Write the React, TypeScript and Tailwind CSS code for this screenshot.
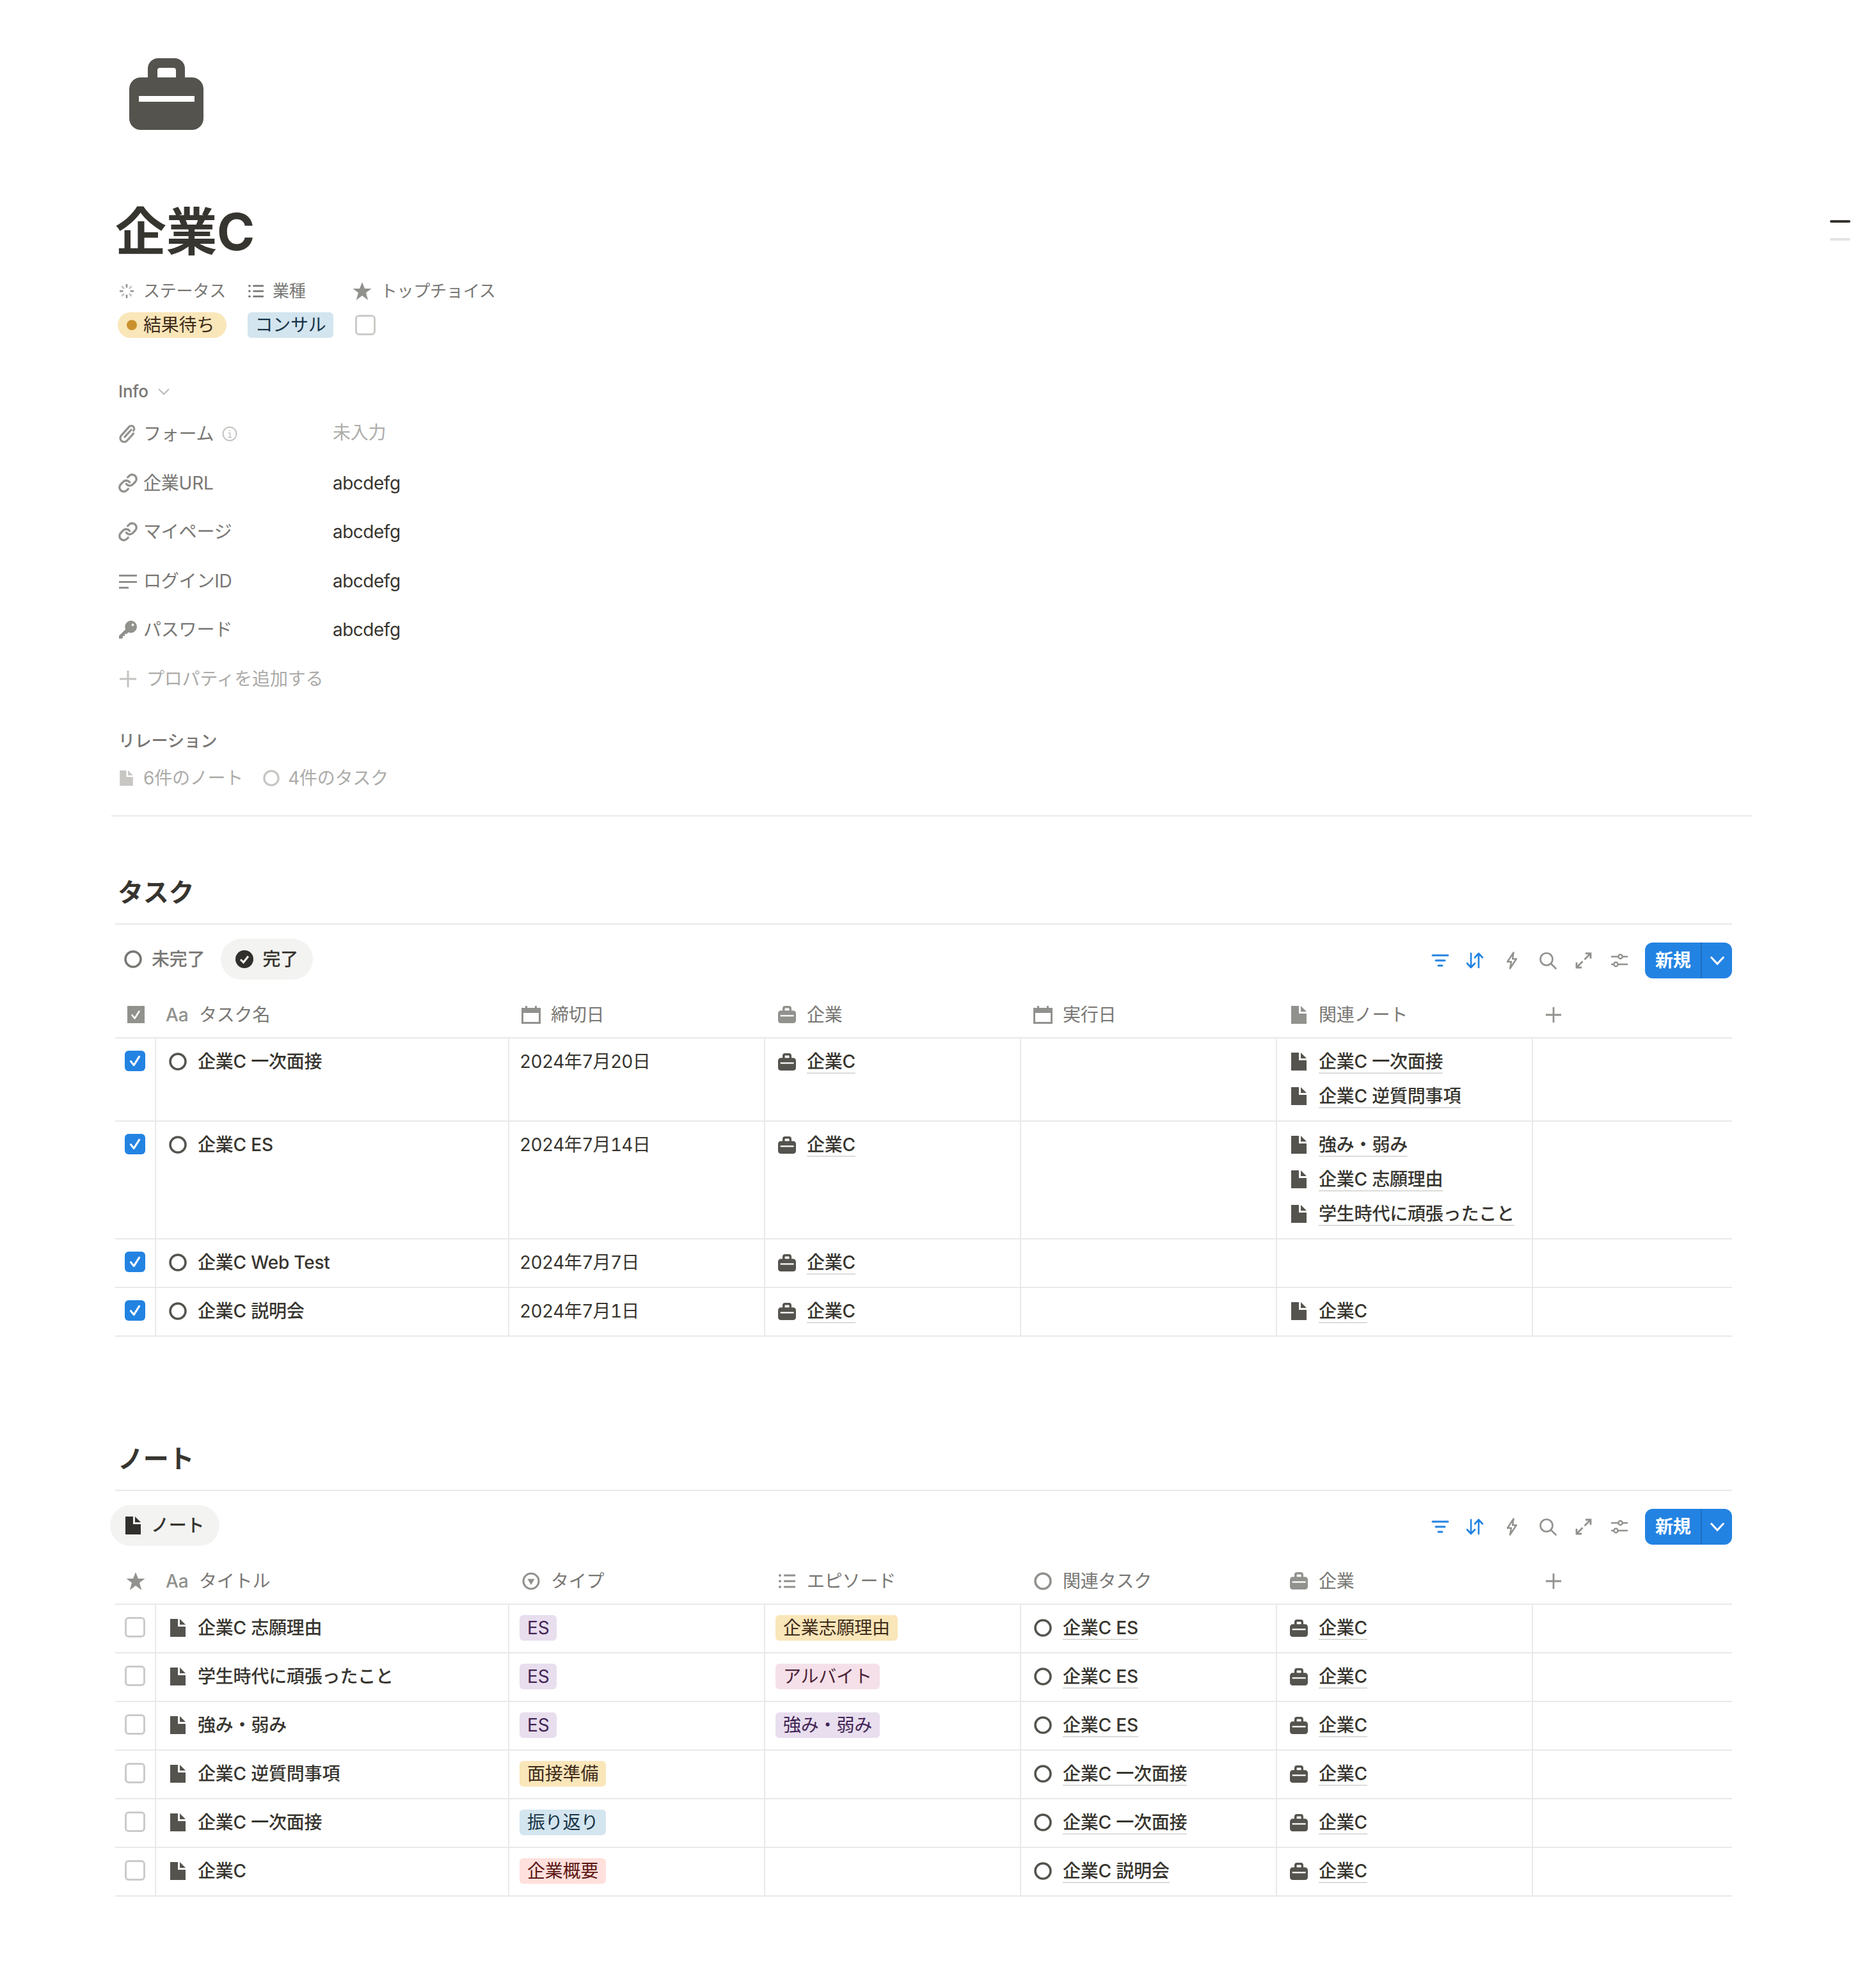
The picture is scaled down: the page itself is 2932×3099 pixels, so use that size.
import React from 'react'
import { Link as LinkIcon } from 'lucide-react'

const COLS = 'grid w-[2527px] grid-cols-[64px_552px_400px_400px_400px_400px_311px]'
const CELL = 'border-r-2 border-[#e9e9e7] pt-4'
const CHECK_CELL = 'border-r-2 border-[#e9e9e7] pt-[19px] flex justify-center'

function Case({ className = '' }: { className?: string }) {
  return (
    <svg viewBox="0 0 116 112" className={className} fill="currentColor">
      <path
        fillRule="evenodd"
        d="M29 30V16A16 16 0 0 1 45 0H71A16 16 0 0 1 87 16V30H98A18 18 0 0 1 116 48V94A18 18 0 0 1 98 112H18A18 18 0 0 1 0 94V48A18 18 0 0 1 18 30ZM44 30H73V19a4 4 0 0 0-4-4H48a4 4 0 0 0-4 4ZM15 59H102V68H15Z"
      />
    </svg>
  )
}

function Doc({ className = '' }: { className?: string }) {
  return (
    <svg viewBox="0 0 24 28" className={className} fill="currentColor">
      <path d="M0 0H12V12H24V28H0Z" />
      <path d="M15 0L24 9H15Z" />
    </svg>
  )
}

function Ring({ className = '' }: { className?: string }) {
  return (
    <svg viewBox="0 0 28 28" className={className} fill="none" stroke="currentColor" strokeWidth="3.5">
      <circle cx="14" cy="14" r="12" />
    </svg>
  )
}

function Star({ className = '' }: { className?: string }) {
  return (
    <svg viewBox="0 0 30 28" className={className} fill="currentColor">
      <path d="M15 0L19 10H29.5L21 16.5L24.2 28L15 21L5.8 28L9 16.5L.5 10H11Z" />
    </svg>
  )
}

function ListIcon({ className = '' }: { className?: string }) {
  return (
    <svg viewBox="0 0 26 24" className={className} fill="currentColor">
      <circle cx="2" cy="3" r="2" />
      <circle cx="2" cy="12" r="2" />
      <circle cx="2" cy="21" r="2" />
      <rect x="8" y="1.5" width="18" height="3" />
      <rect x="8" y="10.5" width="18" height="3" />
      <rect x="8" y="19.5" width="18" height="3" />
    </svg>
  )
}

function Calendar({ className = '' }: { className?: string }) {
  return (
    <svg viewBox="0 0 30 28" className={className} fill="currentColor">
      <path fillRule="evenodd" d="M6 0H9V3H21V0H24V3H30V28H0V3H6ZM3 11V25H27V11Z" />
    </svg>
  )
}

function SelectIcon({ className = '' }: { className?: string }) {
  return (
    <svg viewBox="0 0 28 28" className={className}>
      <circle cx="14" cy="14" r="12" fill="none" stroke="currentColor" strokeWidth="3" />
      <path d="M8.5 10.5H19.5L14 20Z" fill="currentColor" />
    </svg>
  )
}

function Spinner() {
  const spokes = [0, 45, 90, 135, 180, 225, 270, 315]
  return (
    <svg viewBox="0 0 24 24" className="w-6 h-6" stroke="#91918e" strokeWidth="2.6">
      {spokes.map((a, i) => (
        <line key={a} x1="12" y1="1" x2="12" y2="6.5" opacity={i % 2 ? 0.55 : 1} transform={`rotate(${a} 12 12)`} />
      ))}
    </svg>
  )
}

function Clip() {
  return (
    <svg viewBox="0 0 28 28" className="w-7 h-7" fill="none" stroke="#91918e" strokeWidth="3.2" strokeLinecap="round">
      <g transform="rotate(42 14 14)">
        <path d="M20 8V23a6 6 0 0 1-12 0V4.5a4.5 4.5 0 0 1 9 0" />
        <path d="M13.5 6V21" />
      </g>
    </svg>
  )
}

function TextLines() {
  return (
    <svg viewBox="0 0 28 24" className="w-7 h-6" fill="#91918e">
      <rect y="2" width="28" height="3" />
      <rect y="12" width="28" height="3" />
      <rect y="21" width="15" height="3" />
    </svg>
  )
}

function KeyIcon() {
  return (
    <svg viewBox="0 0 28 28" className="w-7 h-7" fill="#91918e">
      <path
        fillRule="evenodd"
        d="M18.5 0A9.5 9.5 0 1 1 14.6 18.2L12 20.8H9V24H6V27L4 28H0V23.5L10.2 13.4A9.5 9.5 0 0 1 18.5 0ZM21.5 4.5a2 2 0 1 0 0 4a2 2 0 1 0 0-4Z"
      />
    </svg>
  )
}

function InfoIcon() {
  return (
    <svg viewBox="0 0 24 24" className="w-6 h-6" fill="none" stroke="#c4c4c1" strokeWidth="2">
      <circle cx="12" cy="12" r="10.5" />
      <path d="M10 10.5H12.5V17M9.5 17.5H15" strokeWidth="1.6" />
      <circle cx="12" cy="7" r="1" fill="#c4c4c1" stroke="none" />
    </svg>
  )
}

function Plus({ className = '' }: { className?: string }) {
  return (
    <svg viewBox="0 0 28 28" className={className} stroke="currentColor" strokeWidth="3">
      <path d="M14 1V27M1 14H27" />
    </svg>
  )
}

function Check({ className = '' }: { className?: string }) {
  return (
    <svg viewBox="0 0 20 20" className={className} fill="none" stroke="currentColor" strokeWidth="2.6" strokeLinecap="round" strokeLinejoin="round">
      <path d="M4.5 10.5L8.5 15.5L15.5 4.5" />
    </svg>
  )
}

function CheckBox({ checked }: { checked: boolean }) {
  if (checked) {
    return (
      <div className="w-8 h-8 rounded-[6px] bg-[#2383e2] text-white flex items-center justify-center">
        <Check className="w-6 h-6" />
      </div>
    )
  }
  return <div className="w-8 h-8 rounded-[6px] border-[3px] border-[#cbcbc9]" />
}

function Toolbar() {
  return (
    <div className="flex items-center mt-[6px] text-[#91918e]">
      <div className="flex items-center gap-7">
        <svg viewBox="0 0 28 28" className="w-7 h-7 text-[#2383e2]" stroke="currentColor" strokeWidth="3" strokeLinecap="round">
          <path d="M2 6H26M7 14H21M11 22H17" />
        </svg>
        <svg viewBox="0 0 28 28" className="w-7 h-7 text-[#2383e2] -translate-x-[2px]" fill="none" stroke="currentColor" strokeWidth="2.6" strokeLinecap="round" strokeLinejoin="round">
          <path d="M8 3V25M2 18.5L8 25L14 18.5M20 25V3M14 9.5L20 3L26 9.5" />
        </svg>
        <svg viewBox="0 0 28 28" className="w-7 h-7" fill="none" stroke="currentColor" strokeWidth="2.4" strokeLinejoin="round">
          <path d="M16.5 1.5L7 16H13L11 26.5L21 11.5H15Z" />
        </svg>
        <svg viewBox="0 0 28 28" className="w-7 h-7" fill="none" stroke="currentColor" strokeWidth="2.6" strokeLinecap="round">
          <circle cx="12" cy="12" r="9.5" />
          <path d="M19 19L26.5 26.5" />
        </svg>
        <svg viewBox="0 0 28 28" className="w-7 h-7" fill="none" stroke="currentColor" strokeWidth="2.8">
          <path d="M17 3H25V11M25 3L15.5 12.5M11 25H3V17M3 25L12.5 15.5" />
        </svg>
        <svg viewBox="0 0 28 28" className="w-7 h-7" fill="none" stroke="currentColor" strokeWidth="2.4">
          <path d="M1 8H12M19 8H27M1 20H5M12 20H27" />
          <circle cx="15.5" cy="8" r="3.2" />
          <circle cx="8.5" cy="20" r="3.2" />
        </svg>
      </div>
      <div className="ml-[26px] w-[136px] h-14 rounded-[12px] bg-[#2383e2] text-white flex items-stretch">
        <div className="w-[89px] flex items-center pl-4 text-[28px] font-bold border-r-2 border-[#1c6fc2]">新規</div>
        <div className="flex-1 flex items-center justify-center">
          <svg viewBox="0 0 24 24" className="w-7 h-7" fill="none" stroke="currentColor" strokeWidth="2.6" strokeLinecap="round">
            <path d="M4 8L12 16.5L20 8" />
          </svg>
        </div>
      </div>
    </div>
  )
}

function HeadCell({ icon, label }: { icon: React.ReactNode; label: string }) {
  return (
    <div className="flex items-center">
      <div className="ml-[18px] w-8 flex justify-center text-[#91918e]">{icon}</div>
      <span className="ml-[15px] text-[#787774]">{label}</span>
    </div>
  )
}

function LinkText({ children }: { children: React.ReactNode }) {
  return <span className="leading-[29px] border-b-2 border-[#dcdcda] font-medium">{children}</span>
}

function Related({ icon, label }: { icon: React.ReactNode; label: string }) {
  return (
    <div className="flex items-center h-10">
      <div className="ml-[18px] w-8 flex justify-center text-[#55534e]">{icon}</div>
      <div className="ml-[15px]">
        <LinkText>{label}</LinkText>
      </div>
    </div>
  )
}

const docIcon = <Doc className="w-6 h-7" />
const caseIcon = <Case className="w-7 h-[27px]" />
const ringIcon = <Ring className="w-7 h-7" />

function TableHeader({ first, title, cols }: { first: React.ReactNode; title: string; cols: { icon: React.ReactNode; label: string }[] }) {
  return (
    <div className={`${COLS} h-[73px] mt-[19px] border-b-2 border-[#e9e9e7]`}>
      <div className="flex items-center justify-center text-[#91918e]">{first}</div>
      <div className="flex items-center">
        <span className="ml-[15px] w-[37px] text-[28px] text-[#91918e] font-medium">Aa</span>
        <span className="ml-[15px] text-[#787774]">{title}</span>
      </div>
      {cols.map((c) => (
        <HeadCell key={c.label} icon={c.icon} label={c.label} />
      ))}
      <div className="flex items-center text-[#91918e]">
        <Plus className="ml-[19px] w-[26px] h-[26px]" />
      </div>
    </div>
  )
}

const tasks = [
  { name: '企業C 一次面接', date: '2024年7月20日', notes: ['企業C 一次面接', '企業C 逆質問事項'] },
  { name: '企業C ES', date: '2024年7月14日', notes: ['強み・弱み', '企業C 志願理由', '学生時代に頑張ったこと'] },
  { name: '企業C Web Test', date: '2024年7月7日', notes: [] },
  { name: '企業C 説明会', date: '2024年7月1日', notes: ['企業C'] },
]

const TAG = {
  purple: 'bg-[#e8deee] text-[#412454]',
  yellow: 'bg-[#f9e6b9] text-[#402c1b]',
  blue: 'bg-[#d3e5ef] text-[#183347]',
  red: 'bg-[#ffe0dc] text-[#5d1715]',
  pink: 'bg-[#f5e0e9] text-[#4c2337]',
}

const notes = [
  { name: '企業C 志願理由', type: 'ES', typeTag: TAG.purple, ep: '企業志願理由', epTag: TAG.yellow, task: '企業C ES' },
  { name: '学生時代に頑張ったこと', type: 'ES', typeTag: TAG.purple, ep: 'アルバイト', epTag: TAG.pink, task: '企業C ES' },
  { name: '強み・弱み', type: 'ES', typeTag: TAG.purple, ep: '強み・弱み', epTag: TAG.purple, task: '企業C ES' },
  { name: '企業C 逆質問事項', type: '面接準備', typeTag: TAG.yellow, ep: '', epTag: '', task: '企業C 一次面接' },
  { name: '企業C 一次面接', type: '振り返り', typeTag: TAG.blue, ep: '', epTag: '', task: '企業C 一次面接' },
  { name: '企業C', type: '企業概要', typeTag: TAG.red, ep: '', epTag: '', task: '企業C 説明会' },
]

function Tag({ className, children }: { className: string; children: React.ReactNode }) {
  return <span className={`inline-flex items-center h-10 px-3 rounded-[6px] ${className}`}>{children}</span>
}

function TaskTable() {
  return (
    <>
      <TableHeader
        first={
          <div className="w-[27px] h-[27px] bg-[#91918e] text-white flex items-center justify-center">
            <Check className="w-5 h-5" />
          </div>
        }
        title="タスク名"
        cols={[
          { icon: <Calendar className="w-[30px] h-7" />, label: '締切日' },
          { icon: <Case className="w-7 h-[27px]" />, label: '企業' },
          { icon: <Calendar className="w-[30px] h-7" />, label: '実行日' },
          { icon: <Doc className="w-6 h-7" />, label: '関連ノート' },
        ]}
      />
      {tasks.map((t) => (
        <div key={t.name} className={`${COLS} border-b-2 border-[#e9e9e7]`}>
          <div className={CHECK_CELL}>
            <CheckBox checked />
          </div>
          <div className={CELL}>
            <div className="flex items-center h-10 font-medium">
              <div className="ml-[18px] w-8 flex justify-center text-[#55534e]">{ringIcon}</div>
              <span className="ml-[15px]">{t.name}</span>
            </div>
          </div>
          <div className={CELL}>
            <div className="ml-4 h-10 flex items-center tabular-nums tracking-[-0.7px]">{t.date}</div>
          </div>
          <div className={CELL}>
            <Related icon={caseIcon} label="企業C" />
          </div>
          <div className={CELL} />
          <div className={`${CELL} pb-[18px] flex flex-col gap-[14px]`}>
            {t.notes.length === 0 && <div className="h-10" />}
            {t.notes.map((n) => (
              <Related key={n} icon={docIcon} label={n} />
            ))}
          </div>
          <div />
        </div>
      ))}
    </>
  )
}

function NoteTable() {
  return (
    <>
      <TableHeader
        first={<Star className="w-[30px] h-7" />}
        title="タイトル"
        cols={[
          { icon: <SelectIcon className="w-7 h-7" />, label: 'タイプ' },
          { icon: <ListIcon className="w-[26px] h-6" />, label: 'エピソード' },
          { icon: <Ring className="w-7 h-7" />, label: '関連タスク' },
          { icon: <Case className="w-7 h-[27px]" />, label: '企業' },
        ]}
      />
      {notes.map((n) => (
        <div key={n.name} className={`${COLS} h-[76px] border-b-2 border-[#e9e9e7]`}>
          <div className={CHECK_CELL}>
            <CheckBox checked={false} />
          </div>
          <div className={CELL}>
            <div className="flex items-center h-10 font-medium">
              <div className="ml-[18px] w-8 flex justify-center text-[#55534e]">{docIcon}</div>
              <span className="ml-[15px]">{n.name}</span>
            </div>
          </div>
          <div className={CELL}>
            <div className="ml-4">
              <Tag className={n.typeTag}>{n.type}</Tag>
            </div>
          </div>
          <div className={CELL}>
            {n.ep && (
              <div className="ml-4">
                <Tag className={n.epTag}>{n.ep}</Tag>
              </div>
            )}
          </div>
          <div className={CELL}>
            <Related icon={ringIcon} label={n.task} />
          </div>
          <div className={CELL}>
            <Related icon={caseIcon} label="企業C" />
          </div>
          <div />
        </div>
      ))}
    </>
  )
}

const linkIcon = <LinkIcon size={32} strokeWidth={2.5} color="#91918e" className="shrink-0" />

const props = [
  { icon: linkIcon, label: '企業URL' },
  { icon: linkIcon, label: 'マイページ' },
  { icon: <TextLines />, label: 'ログインID' },
  { icon: <KeyIcon />, label: 'パスワード' },
]

function SectionTitle({ children }: { children: React.ReactNode }) {
  return (
    <>
      <h2 className="h-[52px] leading-[52px] pl-1 text-[40px] font-bold">{children}</h2>
      <div className="mt-[22px] h-[2px] w-[2527px] bg-[#e9e9e7]" />
    </>
  )
}

export default function App() {
  return (
    <div
      className="relative bg-white min-h-[3099px] pl-[180px] pb-[134px] text-[28px] leading-10 tracking-[-0.2px] text-[#37352f]"
      style={{ fontFamily: 'Inter, "Noto Sans CJK JP", sans-serif' }}
    >
      {/* page outline marks */}
      <div className="absolute left-[2860px] top-[344px] w-8 h-1 rounded-full bg-[#37352f]" />
      <div className="absolute left-[2860px] top-[372px] w-8 h-1 rounded-full bg-[#e3e3e1]" />

      <div className="pt-[91px] pl-[22px] text-[#55534e]">
        <Case className="w-[116px] h-[112px]" />
      </div>
      <h1 className="mt-[119px] h-20 leading-[80px] text-[80px] font-bold tracking-[-0.5px]">企業C</h1>

      <div className="mt-[33px] flex items-center h-10 text-[26px] text-[#787774]">
        <div className="ml-[6px] flex items-center gap-[14px]">
          <Spinner />
          <span>ステータス</span>
        </div>
        <div className="ml-[35px] flex items-center gap-[14px]">
          <ListIcon className="w-6 h-[22px]" />
          <span>業種</span>
        </div>
        <div className="ml-[73px] flex items-center gap-[14px] text-[#91918e]">
          <Star className="w-[30px] h-7" />
          <span className="text-[#787774]">トップチョイス</span>
        </div>
      </div>
      <div className="mt-[13px] flex items-center h-10">
        <div className="ml-1 w-[170px] h-10 rounded-full bg-[#f9e6b9] text-[#402c1b] flex items-center">
          <span className="ml-[14px] w-4 h-4 rounded-full bg-[#cb912f]" />
          <span className="ml-[10px]">結果待ち</span>
        </div>
        <div className={`ml-[33px] w-[134px] h-10 rounded-[6px] flex items-center justify-center ${TAG.blue}`}>コンサル</div>
        <div className="ml-[34px]">
          <CheckBox checked={false} />
        </div>
      </div>

      <div className="mt-[64px] h-10 flex items-center text-[26px] text-[#787774] font-medium pl-[5px]">
        Info
        <svg viewBox="0 0 20 20" className="ml-[14px] w-5 h-5" fill="none" stroke="#b9b9b6" strokeWidth="2">
          <path d="M2 6L10 14L18 6" />
        </svg>
      </div>

      <div className="mt-2 pl-[6px]">
        <div className="flex items-center h-[76.5px]">
          <div className="w-[334px] flex items-center text-[#787774]">
            <Clip />
            <span className="ml-[10px]">フォーム</span>
            <span className="ml-[13px]">
              <InfoIcon />
            </span>
          </div>
          <span className="-mt-1 text-[#acaba9]">未入力</span>
        </div>
        {props.map((p) => (
          <div key={p.label} className="flex items-center h-[76.5px]">
            <div className="w-[334px] flex items-center text-[#787774]">
              <div className="w-7 flex justify-center">{p.icon}</div>
              <span className="ml-[10px]">{p.label}</span>
            </div>
            <span className="tracking-[-0.5px]">abcdefg</span>
          </div>
        ))}
        <div className="flex items-center h-[76.5px] text-[#acaba9]">
          <Plus className="w-7 h-7 text-[#c4c4c1]" />
          <span className="ml-[15px]">プロパティを追加する</span>
        </div>
      </div>

      <div className="mt-[39px] pl-[5px] h-10 flex items-center text-[26px] font-medium text-[#787774]">リレーション</div>
      <div className="mt-[18px] h-10 pl-[7px] flex items-center text-[#acaba9]">
        <Doc className="w-[21px] h-6 text-[#c7c6c3]" />
        <span className="ml-[16px]">6件のノート</span>
        <Ring className="ml-[31px] w-[26px] h-[26px] text-[#c7c6c3]" />
        <span className="ml-[13px]">4件のタスク</span>
      </div>
      <div className="mt-[38px] -ml-[6px] w-[2564px] h-[2px] bg-[#e9e9e7]" />

      <div className="mt-[93px]">
        <SectionTitle>タスク</SectionTitle>
      </div>
      <div className="mt-[22px] w-[2527px] flex items-start justify-between">
        <div className="-ml-2 flex items-center gap-[3px] h-16">
          <div className="flex items-center gap-[15px] px-[22px] text-[#787774] font-medium">
            <Ring className="w-7 h-7" />
            未完了
          </div>
          <div className="h-16 flex items-center gap-[14px] px-[23px] rounded-full bg-[#f3f3f2] font-medium">
            <svg viewBox="0 0 28 28" className="w-7 h-7">
              <circle cx="14" cy="14" r="14" fill="#32302c" />
              <path d="M8 14.5L12.5 19L20 9.5" fill="none" stroke="#fff" strokeWidth="3" />
            </svg>
            完了
          </div>
        </div>
        <Toolbar />
      </div>
      <TaskTable />

      <div className="mt-[165px]">
        <SectionTitle>ノート</SectionTitle>
      </div>
      <div className="mt-[22px] w-[2527px] flex items-start justify-between">
        <div className="-ml-2 h-16 flex items-center gap-4 pl-6 pr-[24px] rounded-full bg-[#f3f3f2] font-medium">
          <Doc className="w-6 h-7 text-[#32302c]" />
          ノート
        </div>
        <Toolbar />
      </div>
      <NoteTable />
    </div>
  )
}
